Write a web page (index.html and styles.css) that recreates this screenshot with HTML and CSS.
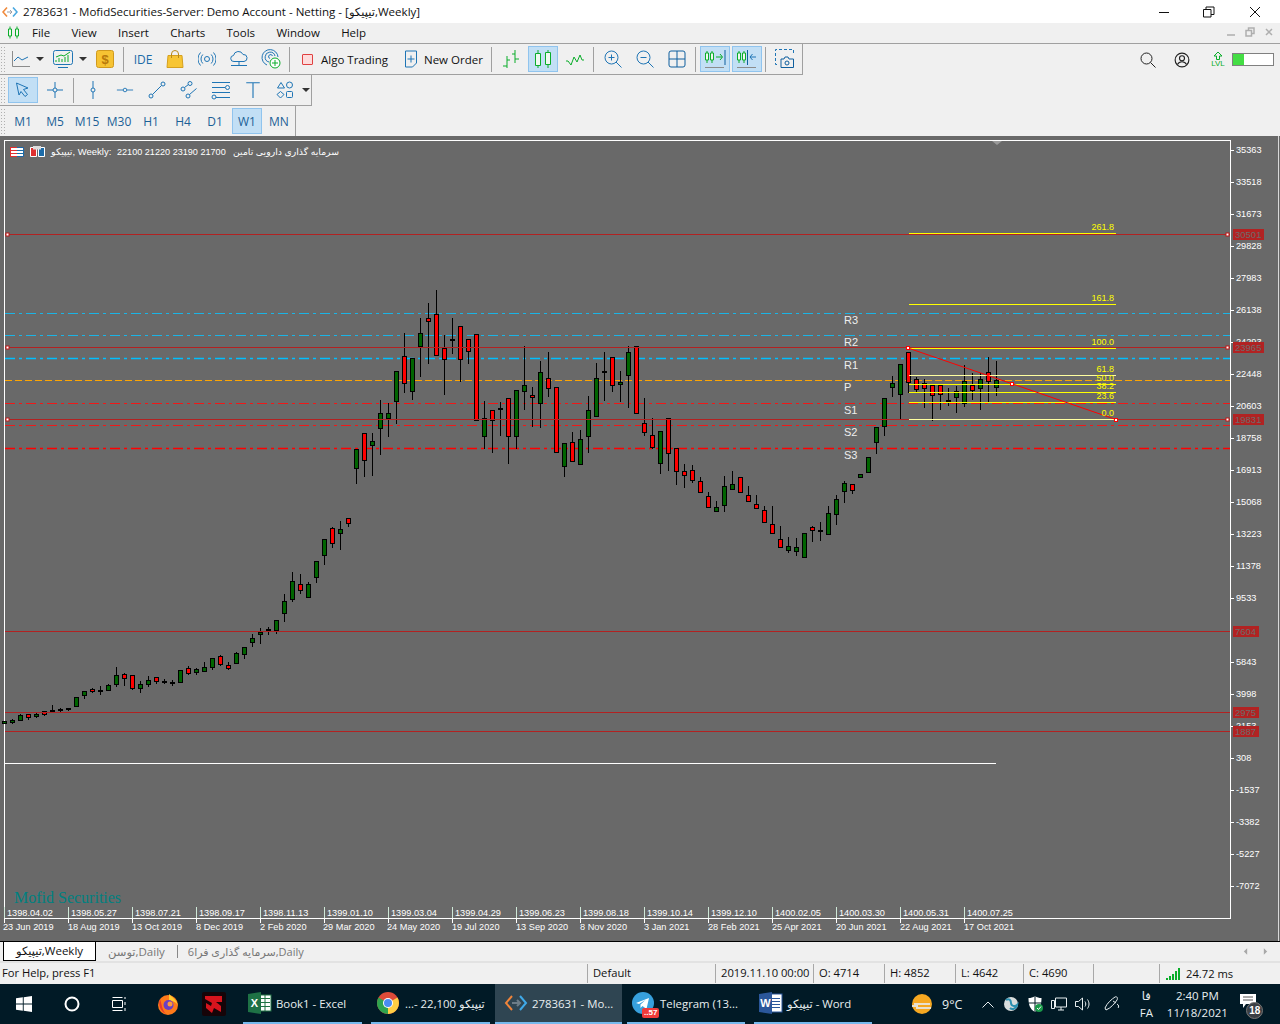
FILE: index.html
```html
<!DOCTYPE html>
<html lang="en">
<head>
<meta charset="utf-8">
<title>2783631 - MofidSecurities-Server</title>
<link rel="stylesheet" href="styles.css">
</head>
<body>
<div class="app">
  <header class="titlebar">
    <svg class="app-ico" viewBox="0 0 16 12"><path class="o2" d="M5 1.500 1 6l4 4.500"/><path class="b2" d="M11 1.500 15 6l-4 4.500"/><path class="gr2" d="M5 6h5M8 4l2 2-2 2"/></svg>
    <span class="title-text">2783631 - MofidSecurities-Server: Demo Account - Netting - [تیپیکو,Weekly]</span>
    <div class="win-btns">
      <svg class="w1" viewBox="0 0 12 12"><path d="M1 6.500h10"/></svg>
      <svg class="w2" viewBox="0 0 12 12"><path d="M.5 3.500h7.500v7.500H.5zM3 3.500V1h8v7.500H8"/></svg>
      <svg class="w3" viewBox="0 0 12 12"><path d="M1 1l10 10M11 1 1 11"/></svg>
    </div>
  </header>

  <nav class="menubar">
    <svg class="menu-ico" viewBox="0 0 13 13"><path class="g" d="M3 .5v12M10 .5v12"/><path class="gf" d="M1.500 3h3v7h-3zM8.500 3h3v7h-3z"/></svg>
    <span>File</span><span>View</span><span>Insert</span><span>Charts</span><span>Tools</span><span>Window</span><span>Help</span>
    <div class="mdi">
      <svg viewBox="0 0 10 10" class="m1"><path d="M1 8h8" /></svg>
      <svg viewBox="0 0 10 10" class="m2"><path d="M1 3.500h5.500V9H1zM3.500 3V1H9v5.500H7"/></svg>
      <svg viewBox="0 0 10 10" class="m3"><path d="M2 2l6 6M8 2 2 8"/></svg>
    </div>
  </nav>

  <div class="toolrow row1">
    <div class="toolbar tb1">
      <i class="grip"></i>
      <div class="btn split s40">
        <svg class="ic18" viewBox="0 0 18 18"><path class="gy" d="M.5 1v15.500H18"/><path class="i" d="M2 11l4-4 4 3 6-3"/></svg><b class="caret"></b>
      </div>
      <div class="btn split s44">
        <svg class="ic20" viewBox="0 0 20 20"><rect class="i" x=".5" y="1.500" width="19" height="14" rx="2"/><path class="g" d="M3 13v-2M6 13v-4M9 13v-3M12 13V8M15 13V6M3 8l5-2 3 1 6-4"/><path class="i" d="M5 18.500h10"/></svg><b class="caret"></b>
      </div>
      <div class="btn">
        <svg class="ic18" viewBox="0 0 18 18"><rect x=".5" y=".5" width="17" height="17" rx="2" fill="#f6c333" stroke="#d09a1e"/><text x="9" y="14" class="dollar">$</text></svg>
      </div>
      <i class="sep"></i>
      <div class="btn txt-blue">IDE</div>
      <div class="btn">
        <svg class="ic18" viewBox="0 0 18 18"><path d="M2 5.500h14l1 12H1z" fill="#f7c533" stroke="#d5a01f"/><path d="M5.500 8V4a3.500 3.500 0 0 1 7 0v4" fill="none" stroke="#b98a17"/></svg>
      </div>
      <div class="btn">
        <svg class="ic18" viewBox="0 0 18 18"><circle class="i" cx="9" cy="9" r="2.500"/><path class="i" d="M4.800 4.500a6.500 6.500 0 0 0 0 9M13.200 4.500a6.500 6.500 0 0 1 0 9M2.500 2.500a9.500 9.500 0 0 0 0 13M15.500 2.500a9.500 9.500 0 0 1 0 13"/></svg>
      </div>
      <div class="btn">
        <svg class="ic18" viewBox="0 0 18 18"><path class="i" d="M4 11.500a3 3 0 0 1-.5-6A5 5 0 0 1 13 4.500a3.500 3.500 0 0 1 1 7zM9 11.500V15M1 15.500h16"/></svg>
      </div>
      <div class="btn">
        <svg class="ic20" viewBox="0 0 20 20"><path class="i" d="M6 16A8 8 0 1 1 17 8M8 13a5 5 0 1 1 6-6M9 9.500a2 2 0 1 1 2.500-2.500"/><circle cx="14" cy="14" r="5" fill="#fff" stroke="#0aad2a"/><path class="g" d="M14 11v6M11 14h6"/></svg>
      </div>
      <i class="sep"></i>
      <div class="btn wide algo"><b class="algo-box"></b><span>Algo Trading</span></div>
      <div class="btn wide order">
        <svg class="ic18" viewBox="0 0 14 18"><path class="i" d="M1.500 1h11v12l-4 4h-7zM7 5.500v7M3.500 9h7"/></svg><span>New Order</span>
      </div>
      <i class="sep"></i>
      <div class="btn"><svg class="ic20" viewBox="0 0 20 20"><path class="g" d="M6 7v12M2 17h4M6 11h3M14 1v13M11 5h3M14 10h4"/></svg></div>
      <div class="btn on"><svg class="ic20" viewBox="0 0 20 20"><path class="g" d="M5 1v18M15 1v18"/><path class="gf" d="M2.500 4.500h5v12h-5zM12.500 3.500h5v12h-5z"/></svg></div>
      <div class="btn"><svg class="ic20" viewBox="0 0 20 20"><path class="g" d="M1 12h2l3 4 3-8 3 5 3-7 2 5h2"/></svg></div>
      <i class="sep"></i>
      <div class="btn"><svg class="ic18" viewBox="0 0 18 18"><circle class="i" cx="7.500" cy="7.500" r="6.500"/><path class="i" d="M4.500 7.500h6M7.500 4.500v6M12 12l5.500 5.500"/></svg></div>
      <div class="btn"><svg class="ic18" viewBox="0 0 18 18"><circle class="i" cx="7.500" cy="7.500" r="6.500"/><path class="i" d="M4.500 7.500h6M12 12l5.500 5.500"/></svg></div>
      <div class="btn"><svg class="ic18" viewBox="0 0 18 18"><rect class="i2" x="1" y="1" width="16" height="16" rx="2"/><path class="i2" d="M9 1v16M1 9h16"/></svg></div>
      <i class="sep"></i>
      <div class="btn on"><svg class="ic22" viewBox="0 0 22 22"><path class="g" d="M3 3v12M8 3v12"/><path class="gf" d="M1.500 5h3v7h-3zM6.500 5h3v7h-3z"/><path class="g" d="M12 9h6M16 6l2.500 3-2.500 3"/><path class="i2" d="M21 2v15"/><path class="gy" d="M1 19.500h19"/></svg></div>
      <div class="btn on"><svg class="ic22" viewBox="0 0 22 22"><path class="g" d="M3 3v12M8 3v12"/><path class="gf" d="M1.500 5h3v7h-3zM6.500 5h3v7h-3z"/><path class="i2" d="M11.500 2v15"/><path class="i" d="M20 9h-6M16.500 6 14 9l2.500 3"/><path class="gy" d="M1 19.500h19"/></svg></div>
      <i class="sep"></i>
      <div class="btn"><svg class="ic20" viewBox="0 0 20 20"><path class="dash" d="M2 15.500H.5v-15h18v4"/><path class="i2" d="M6 10h3l1-2h3l1 2h4.500v8.500H6z"/><circle class="i2" cx="12" cy="14" r="2"/></svg></div>
    </div>
    <div class="side-tools">
      <svg class="ic16" viewBox="0 0 16 16"><circle class="k" cx="6.500" cy="6.500" r="5.500"/><path class="k" d="M10.500 10.500l5 5"/></svg>
      <svg class="ic16 side-user" viewBox="0 0 14 14"><circle class="k" cx="7" cy="7" r="6"/><circle class="k" cx="7" cy="5.500" r="2.200"/><path class="k" d="M3 11c1-2 2.500-2.500 4-2.500s3 .5 4 2.500"/></svg>
      <div class="lvl">
        <svg viewBox="0 0 12 9" class="lvl-arrow"><path class="g" d="M6 1 2 5h2.500v3.500h3V5H10z"/></svg>
        <span>LVL</span>
      </div>
      <div class="meter"><div class="meter-fill" style="width:28%"></div></div>
    </div>
  </div>

  <div class="toolbar tb2">
    <i class="grip"></i>
    <div class="btn on first2"><svg class="ic18" viewBox="0 0 18 18"><path class="i" d="M2.500 2 14 7l-4.500 1.500 4 5-2.500 2-4-5L5 14z"/></svg></div>
    <div class="btn"><svg class="ic18" viewBox="0 0 18 18"><circle class="i" cx="9" cy="9" r="2"/><path class="i" d="M9 1v6M9 11v6M1 9h6M11 9h6"/></svg></div>
    <i class="sep"></i>
    <div class="btn"><svg class="ic18" viewBox="0 0 18 18"><circle class="i" cx="9" cy="9" r="2"/><path class="i" d="M9 0v7M9 11v7"/></svg></div>
    <div class="btn"><svg class="ic18" viewBox="0 0 20 18"><circle class="i" cx="10" cy="9" r="2"/><path class="i" d="M1 9h7M12 9h7"/></svg></div>
    <div class="btn"><svg class="ic18" viewBox="0 0 18 18"><circle class="i" cx="3" cy="15" r="2"/><circle class="i" cx="15" cy="3" r="2"/><path class="i" d="M4.500 13.500l9-9"/></svg></div>
    <div class="btn"><svg class="ic18" viewBox="0 0 18 18"><circle class="i" cx="3" cy="8" r="2"/><circle class="i" cx="10" cy="2.500" r="2"/><circle class="i" cx="8" cy="15" r="2"/><path class="i" d="M4.500 6.500l4-3M9.500 13.500l7-6"/></svg></div>
    <div class="btn"><svg class="ic20" viewBox="0 0 20 18"><path class="i" d="M1 1.500h18M1 6.500h13M1 11.500h18M5 16.500h14"/><circle class="i" cx="16.500" cy="6.500" r="2"/><circle class="i" cx="3" cy="16" r="2"/></svg></div>
    <div class="btn"><svg class="ic18" viewBox="0 0 14 16"><path class="i" d="M1 1.500h12M7 1.500V15"/></svg></div>
    <div class="btn"><svg class="ic18" viewBox="0 0 18 18"><path class="i" d="M5 1.500 8.500 7h-7z"/><circle class="i" cx="13.500" cy="4" r="3"/><path class="i" d="M4.500 10.500 8 13.500l-3.500 3.500L1 13.500z"/><rect class="i" x="10.500" y="10.500" width="6" height="6" rx="1"/></svg></div>
    <b class="caret caret2"></b>
  </div>

  <div class="toolbar tb3">
    <i class="grip"></i>
    <div class="btn tf first2">M1</div><div class="btn tf">M5</div><div class="btn tf">M15</div><div class="btn tf">M30</div><div class="btn tf">H1</div><div class="btn tf">H4</div><div class="btn tf">D1</div><div class="btn tf on">W1</div><div class="btn tf">MN</div>
  </div>

  <main class="chart">
    <svg class="plot" id="plot" viewBox="0 136 1280 805" width="1280" height="805">
      <rect class="frame" x="4.500" y="140.500" width="1226" height="778"/>
      <path class="frame-r" d="M1278.500 136V941"/>
      <path class="tri" d="M992 141h10l-5 4z"/>

      <g class="levels">
        <path class="l-cy" d="M5 313.500H1230M5 335.500H1230"/>
        <path class="l-cy2" d="M5 358.500H1230"/>
        <path class="l-or" d="M5 380.500H1230"/>
        <path class="l-rd" d="M5 403.500H1230M5 425.500H1230"/>
        <path class="l-rd2" d="M5 448.500H1230"/>
      </g>
      <g id="candles"></g>
      <path class="l-br" d="M5 234.500H1230M5 347.500H1230M5 419.500H1230M5 631.500H1230M5 712.500H1230M5 731.500H1230"/>
      <path class="l-wh" d="M5 763.500H996"/>

      <path class="fib" d="M909 233.500H1116M909 304.500H1116M909 348.500H1116M909 384.500H1116M909 392.500H1116M909 402.500H1116"/>
      <path class="fib2" d="M909 375.500H1116M909 419.500H1116"/>
      <path class="diag" d="M908 348 1116 419.500"/>
      <g class="fibt">
        <text x="1114" y="230">261.8</text><text x="1114" y="301">161.8</text><text x="1114" y="345">100.0</text><text x="1114" y="372">61.8</text><text x="1114" y="381">50.0</text><text x="1114" y="389">38.2</text><text x="1114" y="399">23.6</text><text x="1114" y="416">0.0</text>
      </g>
      <g class="dots">
        <rect x="6" y="233" width="3" height="3"/><rect x="1226" y="233" width="3" height="3"/>
        <rect x="6" y="346" width="3" height="3"/><rect x="1226" y="346" width="3" height="3"/>
        <rect x="6" y="418" width="3" height="3"/><rect x="1226" y="418" width="3" height="3"/>
        <rect class="dr" x="906.500" y="346.500" width="3" height="3"/><rect class="dr" x="1010.500" y="382.500" width="3" height="3"/><rect class="dr" x="1114.500" y="418.500" width="3" height="3"/>
      </g>

      <g class="piv">
        <text x="844" y="324">R3</text><text x="844" y="346">R2</text><text x="844" y="369">R1</text><text x="844" y="391">P</text><text x="844" y="414">S1</text><text x="844" y="436">S2</text><text x="844" y="459">S3</text>
      </g>

      <path class="ticks" d="M1230 150.500h4M1230 182.500h4M1230 214.500h4M1230 246.500h4M1230 278.500h4M1230 310.500h4M1230 342.500h4M1230 374.500h4M1230 406.500h4M1230 438.500h4M1230 470.500h4M1230 502.500h4M1230 534.500h4M1230 566.500h4M1230 598.500h4M1230 662.500h4M1230 694.500h4M1230 726.500h4M1230 758.500h4M1230 790.500h4M1230 822.500h4M1230 854.500h4M1230 886.500h4"/>
      <g class="ax">
        <text x="1236" y="153">35363</text><text x="1236" y="185">33518</text><text x="1236" y="217">31673</text><text x="1236" y="249">29828</text><text x="1236" y="281">27983</text><text x="1236" y="313">26138</text><text x="1236" y="345">24293</text><text x="1236" y="377">22448</text><text x="1236" y="409">20603</text><text x="1236" y="441">18758</text><text x="1236" y="473">16913</text><text x="1236" y="505">15068</text><text x="1236" y="537">13223</text><text x="1236" y="569">11378</text><text x="1236" y="601">9533</text><text x="1236" y="665">5843</text><text x="1236" y="697">3998</text><text x="1236" y="729">2153</text><text x="1236" y="761">308</text><text x="1236" y="793">-1537</text><text x="1236" y="825">-3382</text><text x="1236" y="857">-5227</text><text x="1236" y="889">-7072</text>
      </g>
      <g class="tags">
        <rect x="1233" y="229" width="31" height="11"/><rect x="1233" y="342" width="31" height="11"/><rect x="1233" y="414" width="31" height="11"/><rect x="1233" y="626" width="26" height="11"/><rect x="1233" y="707" width="26" height="11"/><rect x="1233" y="726" width="26" height="11"/>
      </g>
      <g class="tagt">
        <text x="1235" y="237.500">30501</text><text x="1235" y="350.500">23965</text><text x="1235" y="422.500">19831</text><text x="1235" y="634.500">7604</text><text x="1235" y="715.500">2975</text><text x="1235" y="734.500">1887</text>
      </g>

      <path class="tk1" d="M4.500 907v11M68.500 907v11M132.500 907v11M196.500 907v11M260.500 907v11M324.500 907v11M388.500 907v11M452.500 907v11M516.500 907v11M580.500 907v11M644.500 907v11M708.500 907v11M772.500 907v11M836.500 907v11M900.500 907v11M964.500 907v11"/>
      <path class="ticks" d="M4.500 918v5M68.500 918v5M132.500 918v5M196.500 918v5M260.500 918v5M324.500 918v5M388.500 918v5M452.500 918v5M516.500 918v5M580.500 918v5M644.500 918v5M708.500 918v5M772.500 918v5M836.500 918v5M900.500 918v5M964.500 918v5"/>
      <g class="ax">
        <text x="7" y="916">1398.04.02</text><text x="71" y="916">1398.05.27</text><text x="135" y="916">1398.07.21</text><text x="199" y="916">1398.09.17</text><text x="263" y="916">1398.11.13</text><text x="327" y="916">1399.01.10</text><text x="391" y="916">1399.03.04</text><text x="455" y="916">1399.04.29</text><text x="519" y="916">1399.06.23</text><text x="583" y="916">1399.08.18</text><text x="647" y="916">1399.10.14</text><text x="711" y="916">1399.12.10</text><text x="775" y="916">1400.02.05</text><text x="839" y="916">1400.03.30</text><text x="903" y="916">1400.05.31</text><text x="967" y="916">1400.07.25</text>
        <text x="3" y="930">23 Jun 2019</text><text x="68" y="930">18 Aug 2019</text><text x="132" y="930">13 Oct 2019</text><text x="196" y="930">8 Dec 2019</text><text x="260" y="930">2 Feb 2020</text><text x="323" y="930">29 Mar 2020</text><text x="387" y="930">24 May 2020</text><text x="452" y="930">19 Jul 2020</text><text x="516" y="930">13 Sep 2020</text><text x="580" y="930">8 Nov 2020</text><text x="644" y="930">3 Jan 2021</text><text x="708" y="930">28 Feb 2021</text><text x="772" y="930">25 Apr 2021</text><text x="836" y="930">20 Jun 2021</text><text x="900" y="930">22 Aug 2021</text><text x="964" y="930">17 Oct 2021</text>
      </g>

      <text class="brand" x="14" y="903">Mofid Securities</text>

      <g>
        <rect x="10.500" y="147.500" width="13" height="9" fill="#fff" stroke="#e03030"/>
        <path d="M10 150.500h7M10 153.500h7" stroke="#e03030"/>
        <path d="M17 147.500h6.500v9H17M17 150.500h6M17 153.500h6" stroke="#1c6ba8" fill="none"/>
        <path d="M30.500 147.500h6v9h-6z" fill="#e03030" stroke="#fff"/>
        <path d="M38.500 147.500h6v9h-6z" fill="#1c6ba8" stroke="#fff"/>
        <rect x="33" y="146" width="8" height="3.500" fill="#ddd"/>
      </g>
      <text class="head" x="51" y="155">تیپیکو, Weekly:</text>
      <text class="head head-num" x="117" y="155">22100 21220 23190 21700</text>
      <text class="head head-fa" x="233" y="155">سرمایه گذاری دارویی تامین</text>
    </svg>
  </main>

  <div class="tabs">
    <div class="tab active">تیپیکو,Weekly</div>
    <div class="tab t2">توسن,Daily</div>
    <i class="tabsep"></i>
    <div class="tab t3">سرمایه گذاری فرا6,Daily</div>
    <div class="tabnav">
      <svg viewBox="0 0 6 10"><path d="M5 1v8L1 5z"/></svg>
      <svg viewBox="0 0 6 10"><path d="M1 1v8l4-4z"/></svg>
    </div>
  </div>

  <footer class="status">
    <div class="st st0">For Help, press F1</div>
    <div class="st st1">Default</div>
    <div class="st st2">2019.11.10 00:00</div>
    <div class="st st3">O: 4714</div>
    <div class="st st3">H: 4852</div>
    <div class="st st4">L: 4642</div>
    <div class="st st5">C: 4690</div>
    <div class="st st6"></div>
    <div class="st st7">
      <svg class="sig" viewBox="0 0 15 12"><path d="M1 10h2v2H1zM4 8h2v4H4zM7 6h2v6H7zM10 3h2v9h-2zM13 0h2v12h-2z"/></svg>
      <span>24.72 ms</span>
    </div>
  </footer>

  <div class="taskbar">
    <div class="tk-ico start"><svg viewBox="0 0 16 16"><path d="M0 2.300 6.800 1.300v6.200H0zM7.700 1.200 16 0v7.500H7.700zM0 8.500h6.800v6.200L0 13.700zM7.700 8.500H16V16l-8.300-1.200z"/></svg></div>
    <div class="tk-ico cort"><svg viewBox="0 0 16 16"><circle cx="8" cy="8" r="6.500"/></svg></div>
    <div class="tk-ico tview"><svg viewBox="0 0 16 16"><path d="M.5 4.500h10v7H.5zM.5 1.500h10M.5 14.500h10M13 1v2M13 6v3M13 12v3"/></svg></div>
    <div class="tk-ico">
      <svg class="ic22" viewBox="0 0 22 22"><circle cx="11" cy="12" r="10" fill="#ff7a1a"/><path d="M12 1c3 3 7 5 9 11-3-4-6-4-9-5z" fill="#ffcb30"/><path d="M3 6c-2 6 0 12 6 15-4-4-4-9-6-15z" fill="#e8392e"/><circle cx="11.500" cy="12" r="5" fill="#6a3fc6"/><circle cx="13" cy="11" r="2.500" fill="#ff9a3c"/></svg>
    </div>
    <div class="tk-ico tk-s">
      <svg class="ic24" viewBox="0 0 24 24"><rect width="24" height="24" rx="2" fill="#160408"/><path d="M3 4h17v6h-6l5 4v6l-7-4-2 5-6-5v-5l5 3 1-3-7-4z" fill="#d7141d"/></svg>
    </div>
    <div class="task ex">
      <svg class="ic24" viewBox="0 0 24 24"><rect x="8" y="4" width="15" height="16" fill="#fff" stroke="#207245"/><path d="M13 7.500h9M13 11.500h9M13 15.500h9M17 4v16" stroke="#207245"/><path d="M0 3l13-2v22L0 21z" fill="#1e7145"/><text x="6.500" y="16" class="bigw">X</text></svg>
      <span>Book1 - Excel</span>
    </div>
    <div class="task ch">
      <svg class="ic22" viewBox="0 0 22 22"><circle cx="11" cy="11" r="11" fill="#dd4b39"/><path d="M11 11 1.500 5.500A11 11 0 0 0 11 22z" fill="#2da44e"/><path d="M11 11v11A11 11 0 0 0 20.500 5.500z" fill="#ffce44"/><circle cx="11" cy="11" r="5" fill="#fff"/><circle cx="11" cy="11" r="4" fill="#4a8cf0"/></svg>
      <span>...- 22,100 تیپیکو</span>
    </div>
    <div class="task mt">
      <svg class="ic24b" viewBox="0 0 24 18"><path class="o3" d="M8 2 2 9l6 7"/><path class="b3" d="M16 2l6 7-6 7"/><path class="gr3" d="M8 9h8M13 6l3 3-3 3"/></svg>
      <span>2783631 - Mo...</span>
    </div>
    <div class="task tg">
      <svg class="ic22" viewBox="0 0 22 22"><circle cx="11" cy="11" r="11" fill="#37a0dd"/><path d="M4 11l13-5-2.500 11-4-3-2 2v-3.500l5-4.500-6.500 4z" fill="#fff"/></svg>
      <b class="badge">..57</b>
      <span>Telegram (13...</span>
    </div>
    <div class="task wd">
      <svg class="ic24" viewBox="0 0 24 24"><rect x="8" y="3" width="15" height="18" fill="#fff" stroke="#2b579a"/><path d="M13 7.500h8M13 10.500h8M13 13.500h8M13 16.500h8" stroke="#2b579a"/><path d="M0 3l13-2v22L0 21z" fill="#2b579a"/><text x="6.500" y="16" class="bigw">W</text></svg>
      <span>تیپیکو - Word</span>
    </div>
    <div class="tray">
      <svg class="ic22 tr-sun" viewBox="0 0 22 22"><circle cx="11" cy="11" r="10" fill="#f6a821"/><path d="M1 13h6M3 11h16M5 15h15" stroke="#e8e0d0" stroke-width="2"/></svg>
      <span class="temp">9°C</span>
      <svg class="tr-chev" viewBox="0 0 12 7"><path d="M.5 6.500 6 1l5.500 5.500"/></svg>
      <svg class="ic16b tr-globe" viewBox="0 0 16 16"><circle cx="8" cy="8" r="7" fill="#d8dcdc"/><path d="M3 4c3-2 5 0 5 3s4 4 6 2c-1 4-5 5-7 3" fill="none" stroke="#2a8fb0" stroke-width="2"/></svg>
      <svg class="ic16b tr-shield" viewBox="0 0 16 16"><path d="M8 0c2 1.500 4 2 6.500 2 0 6-1 11-6.500 14C2.500 13 1.500 8 1.500 2 4 2 6 1.500 8 0z" fill="#fff"/><path d="M8 0v16M1.500 7h13" stroke="#001a25"/><circle cx="12" cy="12" r="4" fill="#1a9a4a"/><path d="M10 12l1.500 1.500 2.500-3" stroke="#fff" fill="none"/></svg>
      <svg class="ic16b tr-line" viewBox="0 0 16 16"><path d="M4.500 2h11v9h-11zM.5 4.500h3v8h-3zM7 14h6M10 11v3"/></svg>
      <svg class="ic16b tr-line tr-spk" viewBox="0 0 16 16"><path d="M.5 5.500h3l4-3.500v12l-4-3.500h-3zM10 5.500c1 1.500 1 3.500 0 5M12.500 3.500c2 3 2 6 0 9"/></svg>
      <svg class="ic16b tr-line tr-pen" viewBox="0 0 16 16"><path d="M1 12c2-5 7-9 10-11 2-1 3 1 2 3-2 3-6 8-11 10zM9 5l3 2M13 8c2 1 2 3 1 4"/></svg>
      <div class="lang"><span>فا</span><span>FA</span></div>
      <div class="clock"><span>2:40 PM</span><span>11/18/2021</span></div>
      <div class="notif">
        <svg viewBox="0 0 16 14"><path d="M0 0h16v10H6l-3 4v-4H0z"/><path class="n-l" d="M3 3h10M3 6h10"/></svg>
        <b>18</b>
      </div>
    </div>
  </div>
</div>
<script src="chart.js"></script>
</body>
</html>
```
FILE: styles.css
```css
* { box-sizing: border-box; }
html, body { margin: 0; padding: 0; }
body { width: 1280px; height: 1024px; overflow: hidden; font-family: "Open Sans", "DejaVu Sans", sans-serif; font-size: 11.5px; color: #111; background: #f0f0f0; }
.app { display: flex; flex-direction: column; width: 1280px; height: 1024px; }

/* shared icon strokes */
svg { display: block; flex: none; }
.i, .i2, .g, .gy, .k, .dash { fill: none; stroke-width: 1; }
.i { stroke: #1f75b5; }
.i2 { stroke: #0f5f9e; }
.g { stroke: #0aad2a; }
.gf { fill: #f0f8f0; stroke: #0aad2a; }
.gy { stroke: #8c8c8c; }
.k { stroke: #222; }
.dash { stroke: #1f75b5; stroke-dasharray: 3 2; }
.ic16 { width: 16px; height: 16px; }
.ic18 { width: 18px; height: 18px; }
.ic20 { width: 20px; height: 20px; }
.ic22 { width: 22px; height: 22px; }
.ic24 { width: 24px; height: 24px; }

/* title bar */
.titlebar { height: 23px; background: #fff; display: flex; align-items: center; padding-left: 2px; flex: none; }
.app-ico { width: 16px; height: 12px; }
.o2, .b2, .gr2 { fill: none; stroke-width: 1.600; }
.o2 { stroke: #f08a3c; }
.b2 { stroke: #4aa8e0; }
.gr2 { stroke: #9aa0a8; stroke-width: 1; }
.title-text { margin-left: 5px; font-size: 11.570px; }
.win-btns { margin-left: auto; display: flex; align-items: center; }
.win-btns svg { width: 12px; height: 12px; fill: none; stroke: #111; }
.w1 { margin-right: 33px; }
.w2 { margin-right: 34px; }
.w3 { margin-right: 19px; }

/* menu */
.menubar { height: 20px; flex: none; display: flex; align-items: center; padding: 0 0 2px 7px; gap: 21.300px; font-size: 11.500px; }
.menu-ico { width: 13px; height: 13px; margin-right: -9.300px; }
.mdi { margin-left: auto; display: flex; gap: 9px; margin-right: 6px; }
.mdi svg { width: 10px; height: 10px; fill: none; stroke: #aeaeae; stroke-width: 1.500; }

/* toolbars */
.toolrow { display: flex; flex: none; height: 32px; border-top: 1px solid #a0a0a0; }
.toolbar { display: flex; align-items: center; flex: none; background: #f0f0f0; border-right: 1px solid #a0a0a0; border-bottom: 1px solid #a0a0a0; }
.tb1 { width: 803px; height: 31px; }
.tb2 { width: 312px; height: 31px; }
.tb3 { width: 296px; height: 30px; border-bottom: 0; }
.grip { width: 6px; height: 26px; flex: none; background-image: radial-gradient(#b0b0b0 35%, transparent 40%); background-size: 3px 3px; }
.btn { width: 30px; height: 26px; margin: 0 1px; flex: none; display: flex; align-items: center; justify-content: center; border: 1px solid transparent; }
.btn.on { background: #c2dff5; border-color: #90c4ee; }
.sep { width: 1px; height: 25px; background: #a0a0a0; margin: 0 3px 0 2px; flex: none; }
.split { justify-content: flex-start; padding-left: 5px; margin: 0; }
.s40 { width: 40px; }
.s44 { width: 43px; padding-left: 6px; }
.caret { width: 0; height: 0; border: 4px solid transparent; border-top: 4px solid #333; border-bottom: 0; margin-left: 6px; flex: none; }
.caret2 { margin-left: 1px; }
.dollar { font: 700 13px "Liberation Sans", sans-serif; fill: #b8790c; text-anchor: middle; }
.txt-blue { color: #1c6ba8; font-size: 12px; }
.wide { justify-content: flex-start; }
.algo { width: 100px; padding-left: 7px; gap: 8px; font-size: 11.500px; }
.algo-box { width: 11px; height: 11px; background: #fddcdc; border: 1px solid #e04040; border-radius: 1px; flex: none; }
.order { width: 92px; padding-left: 7px; gap: 6px; font-size: 11.500px; }
.order svg { width: 14px; }
.side-tools { margin-left: 337px; display: flex; align-items: center; height: 31px; }
.side-user { margin-left: 18px; }
.lvl { margin-left: 21px; width: 14px; display: flex; flex-direction: column; align-items: center; color: #0aad2a; font: 8px/8px "Liberation Sans", sans-serif; }
.lvl-arrow { width: 12px; height: 9px; }
.meter { margin-left: 7px; width: 42px; height: 13px; background: #fff; border: 1px solid #808080; }
.meter-fill { height: 100%; background: #44dd44; }
.first2 { margin-left: 2px; }
.tf { color: #1c5f96; font-size: 12px; }

/* chart */
.chart { height: 805px; flex: none; background: #696969; overflow: hidden; }
.plot { display: block; }
.frame { fill: none; stroke: #fff; }
.frame-r { stroke: #d8d8d8; }
.tri { fill: #9a9a9a; }
.l-cy { stroke: #1ab4e6; stroke-dasharray: 10 4 3 4; }
.l-cy2 { stroke: #00bfff; stroke-width: 1.500; stroke-dasharray: 10 4 3 4; }
.l-or { stroke: #ffa500; stroke-dasharray: 7 3; }
.l-rd { stroke: #f01818; stroke-dasharray: 10 4 3 4; }
.l-rd2 { stroke: #ff0000; stroke-width: 1.500; stroke-dasharray: 10 4 3 4; }
.l-br { stroke: #b22222; }
.l-wh { stroke: #fff; }
.fib { stroke: #ffff00; }
.fib2 { stroke: #ffffa0; }
.diag { stroke: #ff0000; fill: none; }
.fibt text { font: 9px "Liberation Sans", sans-serif; fill: #ffff00; text-anchor: end; }
.dots rect { fill: #fff; stroke: #c01818; stroke-width: 1; }
.dots .dr { stroke: #ff0000; }
.piv text { font: 11px "Liberation Sans", sans-serif; fill: #eee; }
.ticks { stroke: #fff; }
.tk1 { stroke: #cfe8d8; }
.ax text { font: 9.200px "Liberation Sans", sans-serif; fill: #fff; }
.tags rect { fill: #b22222; }
.tagt text { font: 9.500px "Liberation Sans", sans-serif; fill: #6c6c6c; }
.brand { font: 16px "Liberation Serif", serif; fill: #008080; }
.head { font: 9.500px "Liberation Sans", "DejaVu Sans", sans-serif; fill: #fff; }
.head-num { font-size: 9.100px; }
.head-fa { font-size: 9.300px; }
.wick { stroke: #000; }
.body { stroke: #000; stroke-width: 1; }
.body.up { fill: #006400; }
.body.dn { fill: #ff0000; }
.body.dj { fill: #000; }
#candles { shape-rendering: crispEdges; }

/* tabs */
.tabs { height: 20px; flex: none; display: flex; align-items: center; border-top: 1px solid #000; background: #f0f0f0; }
.tab { font-size: 11.500px; color: #777; }
.tab.active { width: 93px; height: 19px; margin-left: 3px; text-align: center; color: #111; background: #fff; border: 1px solid #000; border-top: 0; line-height: 17px; }
.t2 { margin-left: 12px; }
.tabsep { width: 1px; height: 13px; background: #888; margin: 0 10px 0 12px; }
.t3 { font-size: 11px; }
.tabnav { margin-left: auto; display: flex; gap: 15px; margin-right: 12px; }
.tabnav svg { width: 5px; height: 9px; fill: #a8a8a8; }

/* status */
.status { height: 23px; flex: none; display: flex; align-items: center; border-top: 2px solid #e2e2e2; font-size: 11.200px; background: #f0f0f0; white-space: nowrap; }
.st { height: 19px; line-height: 18px; flex: none; padding-left: 5px; border-left: 1px solid #a8a8a8; }
.st0 { width: 587px; border-left: 0; padding-left: 2px; }
.st1 { width: 128px; }
.st2 { width: 98px; }
.st3 { width: 71px; }
.st4 { width: 68px; }
.st5 { width: 70px; }
.st6 { width: 66px; }
.st7 { display: flex; align-items: center; gap: 6px; }
.sig { width: 15px; height: 12px; fill: #0aad2a; }

/* taskbar */
.taskbar { height: 40px; flex: none; display: flex; align-items: center; background: #011a26; color: #e8eef0; font-size: 11.400px; }
.tk-ico { width: 48px; height: 40px; display: flex; align-items: center; justify-content: center; flex: none; }
.tk-s { width: 44px; }
.start svg { width: 16px; height: 16px; fill: #fff; }
.cort svg { width: 16px; height: 16px; fill: none; stroke: #fff; stroke-width: 2; }
.tview svg { width: 16px; height: 16px; fill: none; stroke: #fff; }
.task { height: 40px; display: flex; align-items: center; flex: none; border-bottom: 2px solid #76b9ed; white-space: nowrap; position: relative; }
.ex { width: 119px; margin-left: 7px; padding-left: 5px; gap: 4px; }
.ch { width: 119px; margin-left: 9px; padding-left: 6px; gap: 6px; }
.mt { width: 127px; margin-left: 5px; padding-left: 9px; gap: 4px; background: #2f4552; }
.ic24b { width: 24px; height: 18px; }
.o3, .b3, .gr3 { fill: none; stroke-width: 2; }
.o3 { stroke: #f0843a; }
.b3 { stroke: #3fa9e8; }
.gr3 { stroke: #6d7d88; }
.tg { width: 118px; margin-left: 5px; padding-left: 5px; gap: 6px; }
.badge { position: absolute; left: 15px; top: 24px; background: #ef3a3a; color: #fff; font: 700 8px/10px "Liberation Sans", sans-serif; padding: 0 2px; border-radius: 2px; }
.wd { width: 118px; margin-left: 9px; padding-left: 5px; gap: 4px; }
.bigw { font: 700 11px "Liberation Sans", sans-serif; fill: #fff; text-anchor: middle; }
.tray { margin-left: auto; display: flex; align-items: center; height: 40px; width: 369px; flex: none; }
.temp { margin-left: 9px; font-size: 12.500px; }
.tr-chev { width: 12px; height: 7px; fill: none; stroke: #e8eef0; margin-left: 20px; }
.ic16b { width: 16px; height: 16px; }
.tr-globe { margin-left: 9px; }
.tr-shield { margin-left: 8px; }
.tr-line { margin-left: 8px; fill: none; stroke: #e8eef0; }
.tr-spk { margin-left: 8px; }
.tr-pen { margin-left: 13px; }
.lang { width: 16px; margin-left: 18px; display: flex; flex-direction: column; align-items: center; line-height: 17px; font-size: 11.500px; }
.clock { width: 80px; margin-left: 3px; display: flex; flex-direction: column; align-items: center; line-height: 17px; font-size: 11.500px; }
.notif { margin-left: 0; width: 26px; height: 30px; position: relative; }
.notif svg { width: 16px; height: 14px; fill: #fff; position: absolute; left: 3px; top: 5px; }
.n-l { stroke: #555; fill: none; }
.notif b { position: absolute; left: 9px; top: 13px; width: 17px; height: 17px; border-radius: 50%; background: #3a3f44; border: 1px solid #777; color: #fff; font: 700 10px/15px "Liberation Sans", sans-serif; text-align: center; }
```
FILE: chart.js
```js
var C = [
["g",721,724],["g",720,723,719,724],["g",715,721,714,721],["r",714,718,714,720],["g",714,717,713,718],["r",711,715,711,716],["d",710,711,705,711],["d",709,710,708,712],
["d",708,710,708,711],["g",697,707],["g",691,696,691,699],["r",689,692,688,693],["d",690,692,686,695],["g",685,691,684,691],["g",675,685,667,687],["r",674,679,673,686],
["r",675,689,675,690],["g",684,689,681,693],["g",680,685,676,687],["r",677,682,677,684],["d",681,683,679,684],["d",682,684,680,686],["g",670,683],["r",668,674,666,675],
["g",669,673,668,675],["g",667,672,662,672],["g",658,668,658,670],["r",656,665,655,666],["r",665,669,662,670],["g",653,664,652,664],["g",647,655,647,659],["g",638,643,634,647],
["g",632,635,628,644],["d",629,631,627,635],["g",620,631,620,634],["g",601,614,594,622],["g",581,600,572,602],["r",584,591,574,594],["g",584,598,582,598],["g",561,578,561,583],
["g",539,556,539,565],["r",528,544,527,548],["g",529,534,521,550],["r",518,524,518,527],["g",449,469,449,484],["r",433,461,433,477],["g",441,446,433,476],["g",413,429,400,455],
["g",413,419,403,437],["g",371,402,371,424],["r",356,384,333,393],["g",358,392,358,400],["g",333,347,318,377],["r",318,322,303,364],["r",314,356,290,356],["r",348,360,335,395],
["d",339,341,318,354],["r",326,360,326,382],["r",339,352,339,364],["r",334,421],["g",418,437,401,449],["r",410,421,410,453],["d",408,410,402,436],["r",398,437,398,464],
["g",390,437,390,449],["g",385,392,346,410],["r",395,398,387,427],["g",372,404,361,428],["r",378,389,352,397],["r",387,453],["g",443,467,443,477],["r",442,462,432,462],
["g",439,465,430,465],["g",410,437,396,453],["g",378,417,363,417],["d",371,373,352,401],["r",357,386,357,392],["g",382,385,371,402],["g",352,376,346,408],["r",346,414],
["r",423,433,398,436],["r",435,448,418,449],["g",431,464,431,474],["r",418,454,418,471],["r",448,472,448,485],["r",471,476,464,488],["r",470,481,465,483],["r",481,493,477,493],
["r",496,508,492,508],["g",507,512,501,512],["g",486,506,476,512],["g",484,490,471,490],["r",477,493],["r",495,502,486,502],["r",504,509,495,509],["r",510,523,506,523],
["r",524,534,506,534],["r",539,548,526,548],["g",546,551,537,553],["g",547,552,538,556],["g",533,558],["r",527,531,526,542],["d",530,532,522,541],["g",513,535,506,535],
["g",499,515,495,525],["g",483,492,481,503],["r",484,491,484,494],["g",474,478],["g",457,473],["g",427,443,427,454],["g",398,427,398,436],["g",383,388,376,397],
["g",364,395,364,419],["r",352,383,352,393],["r",379,390,377,392],["r",383,389,379,408],["r",385,396,385,421],["r",385,395,385,410],["d",400,402,388,406],["g",391,398,386,413],
["g",381,404,365,407],["r",385,391,373,400],["g",379,389,373,410],["r",372,382,357,402],["g",380,388,361,396]
];
var ns = "http://www.w3.org/2000/svg";
var g = document.getElementById("candles");
function el(n, a) {
  var e = document.createElementNS(ns, n);
  for (var k in a) e.setAttribute(k, a[k]);
  g.appendChild(e);
}
C.forEach(function (c, i) {
  var x = 4 + 8 * i, t = c[1], b = c[2];
  var wt = c[3] === undefined ? t : c[3], wb = c[4] === undefined ? b : c[4];
  if (wt < t || wb > b) el("line", { "class": "wick", x1: x + .5, x2: x + .5, y1: wt, y2: wb });
  var cl = c[0] === "g" ? "up" : c[0] === "r" ? "dn" : "dj";
  el("rect", { "class": "body " + cl, x: x - 1.5, y: t + .5, width: 4, height: Math.max(b - t - 1, 0.5) });
});
```
